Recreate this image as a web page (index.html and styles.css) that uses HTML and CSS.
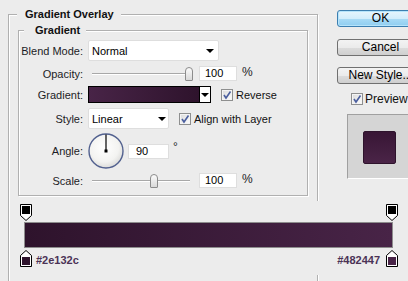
FILE: index.html
```html
<!DOCTYPE html>
<html lang="en">
<head>
    <meta charset="UTF-8">
    <meta name="viewport" content="width=device-width, initial-scale=1.0">
    <title>Layer Style - Gradient Overlay</title>
    <link rel="stylesheet" href="styles.css">
</head>
<body>
    <div class="dialog">
        <fieldset class="group outer">
            <legend>Gradient Overlay</legend>
            <fieldset class="group inner">
                <legend>Gradient</legend>
                <div class="form">
                    <span class="label">Blend Mode:</span>
                    <div class="field">
                        <div class="select blend"><span>Normal</span><i class="caret"></i></div>
                    </div>

                    <span class="label">Opacity:</span>
                    <div class="field">
                        <div class="slider">
                            <div class="track"></div>
                            <div class="rail"><div class="thumb" style="left: 100%"></div></div>
                        </div>
                        <div class="num">100</div>
                        <span class="unit">%</span>
                    </div>

                    <span class="label">Gradient:</span>
                    <div class="field">
                        <div class="swatch"></div>
                        <div class="swatch-btn"><i class="caret"></i></div>
                        <label class="check reverse">
                            <svg class="box" width="12" height="12" viewBox="0 0 12 12">
                                <defs>
                                    <linearGradient id="cb" x1="0" y1="0" x2="1" y2="1">
                                        <stop offset="0" stop-color="#d8d8d8"/>
                                        <stop offset="1" stop-color="#ffffff"/>
                                    </linearGradient>
                                </defs>
                                <rect x="0.5" y="0.5" width="11" height="11" fill="url(#cb)" stroke="#8e8f8f"/>
                                <rect x="1.5" y="1.5" width="9" height="9" fill="none" stroke="#f4f4f4"/>
                                <path d="M3 6 L5 9 L9.5 2.5" fill="none" stroke="#4a5e9e" stroke-width="1.6"/>
                            </svg>
                            <span>Reverse</span>
                        </label>
                    </div>

                    <span class="label">Style:</span>
                    <div class="field">
                        <div class="select style"><span>Linear</span><i class="caret"></i></div>
                        <label class="check align">
                            <svg class="box" width="12" height="12" viewBox="0 0 12 12">
                                <rect x="0.5" y="0.5" width="11" height="11" fill="url(#cb)" stroke="#8e8f8f"/>
                                <rect x="1.5" y="1.5" width="9" height="9" fill="none" stroke="#f4f4f4"/>
                                <path d="M3 6 L5 9 L9.5 2.5" fill="none" stroke="#4a5e9e" stroke-width="1.6"/>
                            </svg>
                            <span>Align with Layer</span>
                        </label>
                    </div>

                    <span class="label">Angle:</span>
                    <div class="field">
                        <svg class="dial" width="36" height="36" viewBox="0 0 36 36">
                            <defs>
                                <radialGradient id="dialFill" cx="0.45" cy="0.4" r="0.6">
                                    <stop offset="0" stop-color="#ffffff"/>
                                    <stop offset="0.7" stop-color="#f3f3f1"/>
                                    <stop offset="1" stop-color="#dcdcda"/>
                                </radialGradient>
                            </defs>
                            <circle cx="18" cy="18" r="17" fill="url(#dialFill)" stroke="#52618f" stroke-width="1.4"/>
                            <line x1="18" y1="18" x2="18" y2="1.5" stroke="#000" stroke-width="1.2"/>
                            <rect x="16.5" y="16.5" width="3" height="3" fill="#000"/>
                        </svg>
                        <div class="num angle">90</div>
                        <span class="unit deg">°</span>
                    </div>

                    <span class="label">Scale:</span>
                    <div class="field">
                        <div class="slider">
                            <div class="track"></div>
                            <div class="rail"><div class="thumb" style="left: 64%"></div></div>
                        </div>
                        <div class="num">100</div>
                        <span class="unit">%</span>
                    </div>
                </div>
            </fieldset>
        </fieldset>

        <div class="side">
            <button class="btn default">OK</button>
            <button class="btn">Cancel</button>
            <button class="btn">New Style...</button>
            <label class="check preview">
                <svg class="box" width="12" height="12" viewBox="0 0 12 12">
                    <rect x="0.5" y="0.5" width="11" height="11" fill="url(#cb)" stroke="#8e8f8f"/>
                    <rect x="1.5" y="1.5" width="9" height="9" fill="none" stroke="#f4f4f4"/>
                    <path d="M3 6 L5 9 L9.5 2.5" fill="none" stroke="#4a5e9e" stroke-width="1.6"/>
                </svg>
                <span>Preview</span>
            </label>
            <div class="preview-box">
                <div class="preview-swatch"></div>
            </div>
        </div>
    </div>

    <div class="editor">
        <div class="stops">
            <svg width="12" height="17" viewBox="0 0 12 17">
                <path d="M0.5 0.5 H11.5 V11.5 L6 16.5 L0.5 11.5 Z" fill="#fff" stroke="#000"/>
                <rect x="2" y="2" width="8" height="8" fill="#000"/>
            </svg>
            <svg width="12" height="17" viewBox="0 0 12 17">
                <path d="M0.5 0.5 H11.5 V11.5 L6 16.5 L0.5 11.5 Z" fill="#fff" stroke="#000"/>
                <rect x="2" y="2" width="8" height="8" fill="#000"/>
            </svg>
        </div>
        <div class="bar"></div>
        <div class="stops bottom">
            <div class="stop-info">
                <svg width="12" height="17" viewBox="0 0 12 17">
                    <path d="M6 0.5 L11.5 5.5 V16.5 H0.5 V5.5 Z" fill="#fff" stroke="#000"/>
                    <rect x="2" y="7" width="8" height="8" fill="#2e132c"/>
                </svg>
                <span class="hex">#2e132c</span>
            </div>
            <div class="stop-info">
                <span class="hex">#482447</span>
                <svg width="12" height="17" viewBox="0 0 12 17">
                    <path d="M6 0.5 L11.5 5.5 V16.5 H0.5 V5.5 Z" fill="#fff" stroke="#000"/>
                    <rect x="2" y="7" width="8" height="8" fill="#482447"/>
                </svg>
            </div>
        </div>
    </div>
</body>
</html>
```

FILE: styles.css
```css
html, body {
    margin: 0;
    height: 281px;
    overflow: hidden;
}

body {
    position: relative;
    background: #ececec;
    font-family: "Liberation Sans", Arial, sans-serif;
    font-size: 11px;
    color: #1c1c26;
}

.dialog {
    display: flex;
    align-items: flex-start;
    width: 440px;
}

/* etched group boxes */
.group {
    margin: 0;
    padding: 0;
    min-width: 0;
    box-sizing: border-box;
    border: 1px solid #b0b0b0;
    box-shadow: 1px 1px 0 #fff, inset 1px 1px 0 #fff;
}

.group legend {
    line-height: 13px;
    font-weight: bold;
    color: #111;
    background: #ececec;
}

.outer {
    margin: 8px 0 0 8px;
    width: 310px;
    height: 300px;
    flex-shrink: 0;
}

.outer > legend {
    margin-left: 8px;
    padding: 0 7px 0 8px;
}

.inner {
    margin: 3px 9px 0 9px;
    padding: 2px 0 3px 0;
}

.inner > legend {
    margin-left: 5px;
    padding: 0 6px 0 11px;
}

.form {
    display: grid;
    grid-template-columns: 64px max-content;
    grid-template-rows: 23px 23px 19px 29px 36px 23px;
    column-gap: 5px;
    align-items: center;
}

.label {
    justify-self: end;
    white-space: nowrap;
}

.field {
    display: flex;
    align-items: center;
}

.select {
    display: flex;
    align-items: center;
    justify-content: space-between;
    box-sizing: border-box;
    height: 21px;
    padding: 0 4px 0 3px;
    background: #fff;
    border: 1px solid #dedede;
    border-radius: 2px;
    color: #000;
}

.select.blend { width: 131px; }
.select.style { width: 81px; padding-right: 2px; }

.caret {
    width: 0;
    height: 0;
    border-left: 4px solid transparent;
    border-right: 4px solid transparent;
    border-top: 4px solid #000;
}

.slider {
    position: relative;
    width: 107px;
    height: 17px;
    margin-top: 2px;
}

.track {
    position: absolute;
    left: 4px;
    right: 5px;
    top: 7px;
    border-top: 1px solid #a8a8a8;
    border-bottom: 1px solid #fff;
}

.rail {
    position: absolute;
    left: 4px;
    right: 6px;
    top: 0;
    bottom: 0;
}

.thumb {
    position: absolute;
    top: 1px;
    width: 8px;
    height: 14px;
    box-sizing: border-box;
    transform: translateX(-50%);
    border: 1px solid #8c8c8c;
    border-radius: 4px 4px 1px 1px;
    background: linear-gradient(#fbfbfb, #d9d9d9);
}

.num {
    box-sizing: border-box;
    width: 38px;
    height: 15px;
    line-height: 13px;
    padding-left: 5px;
    margin-left: 4px;
    background: #fff;
    border: 1px solid #dedede;
    color: #000;
}

.num.angle {
    width: 41px;
    padding-left: 7px;
}

.unit {
    margin-left: 5px;
    margin-top: -3px;
    font-size: 12px;
}

.unit.deg {
    align-self: flex-start;
    margin: 7px 0 0 4px;
}

.swatch {
    box-sizing: border-box;
    width: 112px;
    height: 17px;
    border: 1px solid #000;
    background: linear-gradient(to right, #482447, #2e132c);
}

.swatch-btn {
    box-sizing: border-box;
    display: flex;
    align-items: center;
    justify-content: center;
    width: 11px;
    height: 17px;
    background: #fff;
    border: 1px solid #000;
    border-left: 0;
}

.check {
    display: flex;
    align-items: center;
    gap: 3px;
    font-size: 11px;
    color: #111;
}

.check .box { flex-shrink: 0; }

.check.reverse { margin-left: 10px; }
.check.align { margin-left: 10px; }

.dial { display: block; }

/* right column */
.side {
    display: flex;
    flex-direction: column;
    align-items: flex-start;
    margin: 10px 0 0 19px;
}

.btn {
    box-sizing: border-box;
    width: 87px;
    height: 17px;
    padding: 0;
    margin-bottom: 11px;
    font-family: "Liberation Sans", Arial, sans-serif;
    font-size: 12px;
    line-height: 15px;
    color: #000;
    border: 1px solid #707070;
    border-radius: 3px;
    background: linear-gradient(#f3f3f3 0%, #ebebeb 50%, #dcdcdc 51%, #cfcfcf 100%);
}

.btn.default {
    margin-bottom: 12px;
    border-color: #3c7fb1;
    background: linear-gradient(#e6f5fd 0%, #d2edfc 50%, #a9dbf6 51%, #8fcdf0 100%);
    box-shadow: inset 0 0 0 1px #b6e4fb;
}

.check.preview {
    margin: -2px 0 0 14px;
    gap: 2px;
    height: 12px;
    font-size: 12px;
}

.preview-box {
    box-sizing: border-box;
    width: 80px;
    height: 65px;
    margin: 9px 0 0 10px;
    padding: 16px 0 0 15px;
    background: #d5d5d5;
    border: 1px solid #a0a0a0;
    border-right-color: #fff;
    border-bottom-color: #fff;
}

.preview-swatch {
    box-sizing: border-box;
    width: 33px;
    height: 33px;
    border: 1px solid #2e132c;
    border-radius: 2px;
    background: linear-gradient(#381635, #4a2447);
}

/* gradient editor strip, drawn over the group box */
.editor {
    position: absolute;
    left: 12px;
    top: 201px;
    width: 390px;
    height: 74px;
    background: #ececec;
}

.stops {
    display: flex;
    justify-content: space-between;
    margin-top: 3px;
    padding: 0 4px 0 8px;
    height: 17px;
}

.stops svg { display: block; }

.bar {
    box-sizing: border-box;
    width: 369px;
    height: 26px;
    margin: 1px 0 0 12px;
    border: 1px solid #8d8d8d;
    background: linear-gradient(to right, #2e132c, #482447);
}

.stops.bottom {
    margin-top: 2px;
}

.stop-info {
    display: flex;
    align-items: flex-end;
    gap: 4px;
}

.stop-info:last-child { gap: 6px; }

.hex {
    font-weight: bold;
    font-size: 11px;
    line-height: 13px;
    color: #4b3356;
}
```
